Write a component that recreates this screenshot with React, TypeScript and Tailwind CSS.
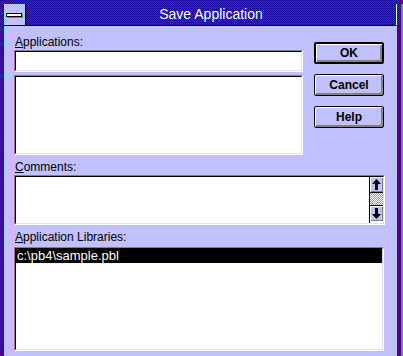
const dither = 'bg-[repeating-conic-gradient(#8a008a_0_25%,#14009c_0_50%)] bg-[length:2px_2px]'

function Label({ first, rest, className = '' }: { first: string; rest: string; className?: string }) {
  return (
    <div className={`pl-[1px] text-[12px] leading-[14px] text-black ${className}`}>
      <span className="underline underline-offset-[1px]">{first}</span>
      {rest}
    </div>
  )
}

function Sunken({ className = '', children }: { className?: string; children?: React.ReactNode }) {
  return (
    <div className={`border border-t-[#808080] border-l-[#808080] border-r-white border-b-white ${className}`}>
      <div className="h-full border border-t-black border-l-black border-r-[#e0e0ff] border-b-[#e0e0ff] bg-white">
        {children}
      </div>
    </div>
  )
}

function Btn({ label, primary }: { label: string; primary?: boolean }) {
  return (
    <div
      className={`flex h-[22px] w-[70px] items-center justify-center rounded-[2px] border-black bg-[#c0c0ff] text-[12px] font-bold text-black shadow-[inset_1px_1px_0_#fff,inset_-2px_-2px_0_#808080] ${primary ? 'border-2' : 'border'}`}
    >
      {label}
    </div>
  )
}

function Arrow({ down }: { down?: boolean }) {
  return (
    <svg width="9" height="11" viewBox="0 0 9 11" className={down ? 'rotate-180' : ''}>
      <polygon points="4.5,0 9,5 6,5 6,11 3,11 3,5 0,5" fill="#000" />
    </svg>
  )
}

function ScrollBtn({ down }: { down?: boolean }) {
  return (
    <div className="flex h-[15px] items-center justify-center bg-[#c0c0ff] shadow-[inset_1px_1px_0_#fff,inset_-1px_-1px_0_#808080]">
      <Arrow down={down} />
    </div>
  )
}

export default function App() {
  return (
    <div className="flex h-[356px] w-[403px] overflow-hidden font-['Liberation_Sans',Arial,sans-serif]">
      <div className={`flex w-[401px] flex-col px-[4px] pt-[4px] ${dither}`}>
        {/* title bar */}
        <div className="flex h-[22px] border-b border-black">
          <div className="flex w-[22px] items-center border-r border-black bg-[#c0c0ff] pl-[2px]">
            <div className="h-[4px] w-[16px] border border-black bg-white shadow-[1px_1px_0_#808080]" />
          </div>
          <div className="flex flex-1 items-center justify-center border-r border-white text-[14px] text-white">
            Save Application
          </div>
        </div>

        {/* client area */}
        <div className="flex-1 bg-[#c0c0ff] pl-[10px]">
          <div className="flex items-start">
            <div className="mt-[9px] w-[289px]">
              <Label first="A" rest="pplications:" />
              <Sunken className="mt-[1px] h-[22px]" />
              <Sunken className="mt-[3px] h-[80px]" />
            </div>
            <div className="ml-[11px] mt-[16px] flex flex-col gap-[10px]">
              <Btn label="OK" primary />
              <Btn label="Cancel" />
              <Btn label="Help" />
            </div>
          </div>

          <Label first="C" rest="omments:" className="mt-[5px]" />
          <Sunken className="mt-[1px] h-[50px] w-[371px]">
            <div className="flex h-full">
              <div className="flex-1" />
              <div className="flex w-[14px] flex-col border-l border-black">
                <ScrollBtn />
                <div className="h-[14px] border-y border-black bg-[repeating-conic-gradient(#ffffff_0_25%,#9a9a9a_0_50%)] bg-[length:2px_2px]" />
                <ScrollBtn down />
              </div>
            </div>
          </Sunken>

          <Label first="A" rest="pplication Libraries:" className="mt-[5px]" />
          <Sunken className="mt-[3px] h-[104px] w-[370px]">
            <div className="h-[14px] bg-black pl-[1px] text-[13px] leading-[14px] text-white">
              {'c:\\pb4\\sample.pbl'}
            </div>
          </Sunken>
        </div>
      </div>
      <div className="flex w-[2px] flex-col bg-[#808080]">
        <div className={`h-[4px] ${dither}`} />
      </div>
    </div>
  )
}
